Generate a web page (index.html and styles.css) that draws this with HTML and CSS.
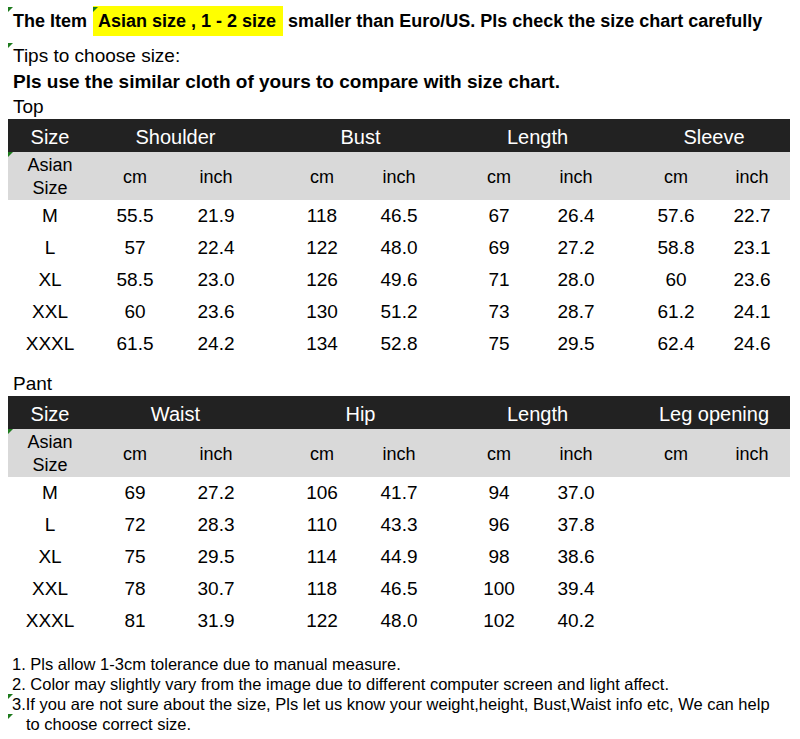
FILE: index.html
```html
<!DOCTYPE html>
<html>
<head>
<meta charset="utf-8">
<link rel="stylesheet" href="styles.css">
</head>
<body>
<div class="page">
  <div class="intro">
    <p class="headline mark">The Item <span class="hl mark">Asian size , 1 - 2 size</span> smaller than Euro/US. Pls check the size chart carefully</p>
    <p class="tips mark">Tips to choose size:</p>
    <p class="advice">Pls use the similar cloth of yours to compare with size chart.</p>
    <p class="label first">Top</p>
  </div>

  <div class="chart">
    <div class="row head">
      <span>Size</span><span>Shoulder</span><span>Bust</span><span>Length</span><span>Sleeve</span>
    </div>
    <div class="row sub mark">
      <span class="asian">Asian<br>Size</span><span>cm</span><span>inch</span><span>cm</span><span>inch</span><span>cm</span><span>inch</span><span>cm</span><span>inch</span>
    </div>
    <div class="row data"><span>M</span><span>55.5</span><span>21.9</span><span>118</span><span>46.5</span><span>67</span><span>26.4</span><span>57.6</span><span>22.7</span></div>
    <div class="row data"><span>L</span><span>57</span><span>22.4</span><span>122</span><span>48.0</span><span>69</span><span>27.2</span><span>58.8</span><span>23.1</span></div>
    <div class="row data"><span>XL</span><span>58.5</span><span>23.0</span><span>126</span><span>49.6</span><span>71</span><span>28.0</span><span>60</span><span>23.6</span></div>
    <div class="row data"><span>XXL</span><span>60</span><span>23.6</span><span>130</span><span>51.2</span><span>73</span><span>28.7</span><span>61.2</span><span>24.1</span></div>
    <div class="row data"><span>XXXL</span><span>61.5</span><span>24.2</span><span>134</span><span>52.8</span><span>75</span><span>29.5</span><span>62.4</span><span>24.6</span></div>
  </div>

  <p class="label second">Pant</p>

  <div class="chart">
    <div class="row head">
      <span>Size</span><span>Waist</span><span>Hip</span><span>Length</span><span>Leg opening</span>
    </div>
    <div class="row sub mark">
      <span class="asian">Asian<br>Size</span><span>cm</span><span>inch</span><span>cm</span><span>inch</span><span>cm</span><span>inch</span><span>cm</span><span>inch</span>
    </div>
    <div class="row data"><span>M</span><span>69</span><span>27.2</span><span>106</span><span>41.7</span><span>94</span><span>37.0</span></div>
    <div class="row data"><span>L</span><span>72</span><span>28.3</span><span>110</span><span>43.3</span><span>96</span><span>37.8</span></div>
    <div class="row data"><span>XL</span><span>75</span><span>29.5</span><span>114</span><span>44.9</span><span>98</span><span>38.6</span></div>
    <div class="row data"><span>XXL</span><span>78</span><span>30.7</span><span>118</span><span>46.5</span><span>100</span><span>39.4</span></div>
    <div class="row data"><span>XXXL</span><span>81</span><span>31.9</span><span>122</span><span>48.0</span><span>102</span><span>40.2</span></div>
  </div>

  <div class="notes">
    <p>1. Pls allow 1-3cm tolerance due to manual measure.</p>
    <p>2. Color may slightly vary from the image due to different computer screen and light affect.</p>
    <p class="mark">3.If you are not sure about the size, Pls let us know your weight,height, Bust,Waist info etc, We can help</p>
    <p class="indent mark">to choose correct size.</p>
  </div>
</div>
</body>
</html>
```
FILE: styles.css
```css
* { box-sizing: border-box; }
html, body { margin: 0; padding: 0; background: #fff; }
body {
  font-family: Arial, "Liberation Sans", sans-serif;
  color: #000;
}
p { margin: 0; }
.page { width: 800px; padding: 0 0 0 8px; }

.mark { position: relative; }
.mark::before {
  content: "";
  position: absolute;
  left: 0;
  top: 0;
  width: 0;
  height: 0;
  border-top: 5px solid #1e7b1e;
  border-right: 5px solid transparent;
}

.intro { padding-top: 6px; }
.headline {
  font-weight: bold;
  font-size: 18px;
  line-height: 30px;
  height: 30px;
  margin-left: -8px;
  padding-left: 13px;
}
.headline.mark::before { left: 8px; top: 1px; }
.hl {
  display: inline-block;
  background: #ffff00;
  padding: 0 7px 0 5px;
  margin-left: 1px;
  height: 30px;
  line-height: 30px;
}
.hl.mark::before { top: 1px; }
.tips {
  margin-top: 7px;
  font-size: 19px;
  line-height: 26px;
  padding-left: 5px;
}
.advice {
  font-size: 19px;
  font-weight: bold;
  line-height: 26px;
  padding-left: 5px;
}
.label {
  font-size: 19px;
  padding-left: 5px;
}
.label.first { line-height: 24px; }
.label.second { line-height: 24px; padding-top: 12px; }

.chart { width: 782px; }
.row {
  display: grid;
  grid-template-columns: [sz] 84px 8px [c1] 70px 11px [i1] 70px 36px [c2] 70px 7px [i2] 70px 30px [c3] 70px 7px [i3] 70px 30px [c4] 70px 6px [i4] 70px 3px;
  text-align: center;
  white-space: nowrap;
}
.row > :nth-child(1) { grid-column: sz; }

.head {
  background: #222222;
  color: #fff;
  height: 33px;
  line-height: 33px;
  padding-top: 2px;
  font-size: 20px;
}
.head > :nth-child(2) { grid-column: c1 / span 3; }
.head > :nth-child(3) { grid-column: c2 / span 3; }
.head > :nth-child(4) { grid-column: c3 / span 3; }
.head > :nth-child(5) { grid-column: c4 / span 3; }

.sub {
  background: #d9d9d9;
  height: 48px;
  font-size: 18px;
  align-items: center;
  padding-top: 2px;
}
.sub .asian { line-height: 23px; }
.sub > :nth-child(2), .data > :nth-child(2) { grid-column: c1; }
.sub > :nth-child(3), .data > :nth-child(3) { grid-column: i1; }
.sub > :nth-child(4), .data > :nth-child(4) { grid-column: c2; }
.sub > :nth-child(5), .data > :nth-child(5) { grid-column: i2; }
.sub > :nth-child(6), .data > :nth-child(6) { grid-column: c3; }
.sub > :nth-child(7), .data > :nth-child(7) { grid-column: i3; }
.sub > :nth-child(8), .data > :nth-child(8) { grid-column: c4; }
.sub > :nth-child(9), .data > :nth-child(9) { grid-column: i4; }

.data {
  height: 32px;
  line-height: 32px;
  font-size: 19px;
}

.notes {
  margin-top: 17px;
  font-size: 16.5px;
  line-height: 20px;
  padding-left: 4px;
}
.notes .mark::before { left: -4px; top: 0; }
.notes .indent { padding-left: 14px; }
```
